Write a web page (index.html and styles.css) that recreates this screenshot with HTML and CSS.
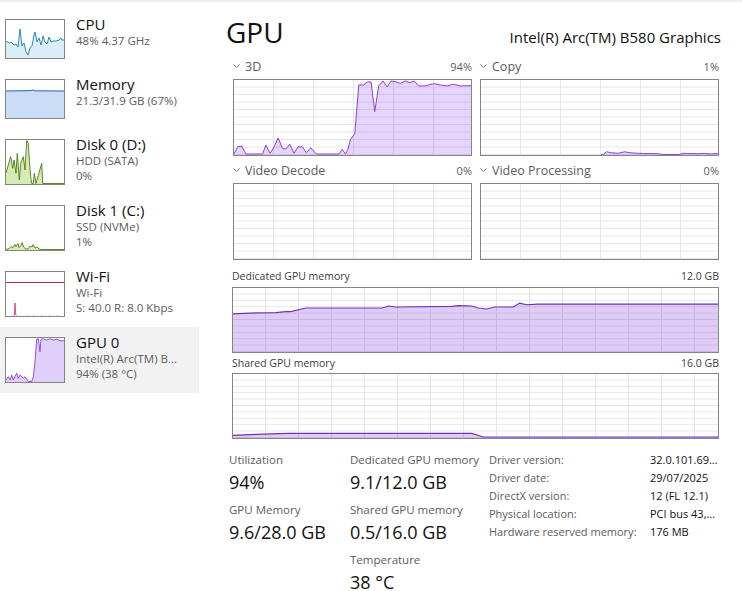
FILE: index.html
```html
<!DOCTYPE html>
<html>
<head>
<meta charset="utf-8">
<title>Task Manager - GPU</title>
<link rel="stylesheet" href="styles.css">
</head>
<body>
<div class="app">
  <aside class="sidebar">
    <div class="item">
      <div class="thumb">
        <svg viewBox="0 0 58 38" preserveAspectRatio="none">
          <path class="cpu-fill" d="M0,38 L0,21 3,23 5,22 8,25 10,24 12,27 14,9 16,26 18,23 20,32 22,35 24,28 26,26 28,15 29,12 31,22 33,18 35,25 37,16 39,22 41,24 43,17 45,22 47,21 50,21 53,20 55,18 56,20 58,20 L58,38 Z"/>
          <polyline class="cpu-line" points="0,21 3,23 5,22 8,25 10,24 12,27 14,9 16,26 18,23 20,32 22,35 24,28 26,26 28,15 29,12 31,22 33,18 35,25 37,16 39,22 41,24 43,17 45,22 47,21 50,21 53,20 55,18 56,20 58,20"/>
        </svg>
      </div>
      <div class="info">
        <div class="name">CPU</div>
        <div class="sub">48% 4.37 GHz</div>
      </div>
    </div>
    <div class="item">
      <div class="thumb">
        <svg viewBox="0 0 58 38" preserveAspectRatio="none">
          <path class="mem-fill" d="M0,38 L0,11 25,10.6 27,10 29,10.8 58,11 L58,38 Z"/>
          <polyline class="mem-line" points="0,11 25,10.6 27,10 29,10.8 58,11"/>
        </svg>
      </div>
      <div class="info">
        <div class="name">Memory</div>
        <div class="sub">21.3/31.9 GB (67%)</div>
      </div>
    </div>
    <div class="item">
      <div class="thumb tall">
        <svg viewBox="0 0 58 44" preserveAspectRatio="none">
          <path class="disk-fill" d="M0,44 L0,33 2.3,25 4.7,16.7 6.7,28.3 8,20 10,33.3 11.3,13.3 13.3,40 14.7,23.3 17.3,16.7 19,30 20.7,0.5 22.3,3.3 23.3,20 24.7,36.7 25.7,43.5 27.3,43.5 28.3,33.3 30,43.5 35.7,23.3 36.7,43.5 58,43.5 L58,44 Z"/>
          <polyline class="disk-line" points="0,33 2.3,25 4.7,16.7 6.7,28.3 8,20 10,33.3 11.3,13.3 13.3,40 14.7,23.3 17.3,16.7 19,30 20.7,0.5 22.3,3.3 23.3,20 24.7,36.7 25.7,43.5 27.3,43.5 28.3,33.3 30,43.5 35.7,23.3 36.7,43.5 58,43.5"/>
        </svg>
      </div>
      <div class="info">
        <div class="name">Disk 0 (D:)</div>
        <div class="sub">HDD (SATA)</div>
        <div class="sub">0%</div>
      </div>
    </div>
    <div class="item">
      <div class="thumb tall">
        <svg viewBox="0 0 58 44" preserveAspectRatio="none">
          <path class="disk-fill" d="M0,44 L0,43.5 3,42.5 5,40.5 7,41.5 9,38.5 10,40.5 12,37.5 13,41.5 15,39.5 16,36.5 18,41.5 20,43 22,43 24,40 26,41 27,38.5 29,42 31,41 33,43 35,43.5 58,43.5 L58,44 Z"/>
          <polyline class="disk-line" points="0,43.5 3,42.5 5,40.5 7,41.5 9,38.5 10,40.5 12,37.5 13,41.5 15,39.5 16,36.5 18,41.5 20,43 22,43 24,40 26,41 27,38.5 29,42 31,41 33,43 35,43.5 58,43.5"/>
        </svg>
      </div>
      <div class="info">
        <div class="name">Disk 1 (C:)</div>
        <div class="sub">SSD (NVMe)</div>
        <div class="sub">1%</div>
      </div>
    </div>
    <div class="item">
      <div class="thumb tall">
        <svg viewBox="0 0 58 44" preserveAspectRatio="none">
          <line class="wifi-top" x1="0" y1="10.5" x2="58" y2="10.5"/>
          <polyline class="wifi-line" points="7.5,43.5 8.5,43 9,31 9.8,43 10.5,43.5"/>
          <circle class="wifi-dot" cx="21" cy="43.3" r="0.5"/>
          <circle class="wifi-dot" cx="28" cy="43.3" r="0.5"/>
          <circle class="wifi-dot" cx="36" cy="43.3" r="0.5"/>
          <circle class="wifi-dot" cx="44" cy="43.3" r="0.5"/>
          <circle class="wifi-dot" cx="51" cy="43.3" r="0.5"/>
        </svg>
      </div>
      <div class="info">
        <div class="name">Wi-Fi</div>
        <div class="sub">Wi-Fi</div>
        <div class="sub">S: 40.0 R: 8.0 Kbps</div>
      </div>
    </div>
    <div class="item selected">
      <div class="thumb tall">
        <svg viewBox="0 0 58 44" preserveAspectRatio="none">
          <path class="gpu-fill" d="M0,44 L0,42 2.3,38.7 4,42 5.7,37 7.3,42 9,38.7 10.7,35.3 12.3,40.3 14,37 15.7,38.7 17.3,40.3 19,38.7 20.7,41 22.3,43.5 25.7,43.5 27.3,38.7 29,23.7 30.7,1.2 32.3,0.8 34,13.7 35,1.2 37.3,0.8 40.7,2 44,0.8 47.3,2 50.7,1.2 54,2.7 58,2.7 L58,44 Z"/>
          <polyline class="gpu-line" points="0,42 2.3,38.7 4,42 5.7,37 7.3,42 9,38.7 10.7,35.3 12.3,40.3 14,37 15.7,38.7 17.3,40.3 19,38.7 20.7,41 22.3,43.5 25.7,43.5 27.3,38.7 29,23.7 30.7,1.2 32.3,0.8 34,13.7 35,1.2 37.3,0.8 40.7,2 44,0.8 47.3,2 50.7,1.2 54,2.7 58,2.7"/>
        </svg>
      </div>
      <div class="info">
        <div class="name">GPU 0</div>
        <div class="sub">Intel(R) Arc(TM) B…</div>
        <div class="sub">94% (38 °C)</div>
      </div>
    </div>
  </aside>

  <main class="main">
    <header class="head">
      <h1 class="title">GPU</h1>
      <div class="device">Intel(R) Arc(TM) B580 Graphics</div>
    </header>

    <section class="engines">
      <div class="engine">
        <div class="label-row">
          <span class="eng-name"><svg class="chev" viewBox="0 0 7 4"><polyline points="0.5,0.5 3.5,3.5 6.5,0.5"/></svg>3D</span>
          <span class="pct">94%</span>
        </div>
        <div class="graph small">
          <svg viewBox="0 0 238 76" preserveAspectRatio="none">
            <path class="g-fill" d="M0,76 L0,75 3.7,67.7 7.7,67 12,75 28.7,75 32,66 36.3,74.3 40.3,67.7 44.3,58.7 48.7,69.3 52,70 56,65 60.3,74.3 64.3,67.7 68.7,67.7 72.7,73.7 77,68.7 82,74.3 83.7,75 105.3,75 108.7,70.3 112,75 114.3,70.3 117,60.3 121.3,54.3 125.3,5 130.3,5 133.7,2 137.7,2 141.3,32 145.3,6 149.7,1 153.7,7 157.7,1 162,1.7 167,3.3 172,1 177,2.7 181,1 185.3,6 192,6 200.3,3.7 207,5 213.7,6 220.3,4.3 227,6 238,5.7 L238,76 Z"/>
            <polyline class="g-line" points="0,75 3.7,67.7 7.7,67 12,75 28.7,75 32,66 36.3,74.3 40.3,67.7 44.3,58.7 48.7,69.3 52,70 56,65 60.3,74.3 64.3,67.7 68.7,67.7 72.7,73.7 77,68.7 82,74.3 83.7,75 105.3,75 108.7,70.3 112,75 114.3,70.3 117,60.3 121.3,54.3 125.3,5 130.3,5 133.7,2 137.7,2 141.3,32 145.3,6 149.7,1 153.7,7 157.7,1 162,1.7 167,3.3 172,1 177,2.7 181,1 185.3,6 192,6 200.3,3.7 207,5 213.7,6 220.3,4.3 227,6 238,5.7"/>
          </svg>
        </div>
      </div>
      <div class="engine">
        <div class="label-row">
          <span class="eng-name"><svg class="chev" viewBox="0 0 7 4"><polyline points="0.5,0.5 3.5,3.5 6.5,0.5"/></svg>Copy</span>
          <span class="pct">1%</span>
        </div>
        <div class="graph small">
          <svg viewBox="0 0 238 76" preserveAspectRatio="none">
            <path class="g-fill" d="M120,76 L122.7,75.5 126,72.7 131,73.7 137.7,74.3 144.3,72.7 149.3,73.7 157.7,74.3 177.7,74.7 182.7,75.5 199.3,75.5 202.7,74.3 217.7,74.7 224.3,74.3 231,75 238,74.3 L238,76 Z"/>
            <polyline class="g-line" points="120,76 122.7,75.5 126,72.7 131,73.7 137.7,74.3 144.3,72.7 149.3,73.7 157.7,74.3 177.7,74.7 182.7,75.5 199.3,75.5 202.7,74.3 217.7,74.7 224.3,74.3 231,75 238,74.3"/>
          </svg>
        </div>
      </div>
      <div class="engine">
        <div class="label-row">
          <span class="eng-name"><svg class="chev" viewBox="0 0 7 4"><polyline points="0.5,0.5 3.5,3.5 6.5,0.5"/></svg>Video Decode</span>
          <span class="pct">0%</span>
        </div>
        <div class="graph small"></div>
      </div>
      <div class="engine">
        <div class="label-row">
          <span class="eng-name"><svg class="chev" viewBox="0 0 7 4"><polyline points="0.5,0.5 3.5,3.5 6.5,0.5"/></svg>Video Processing</span>
          <span class="pct">0%</span>
        </div>
        <div class="graph small"></div>
      </div>
    </section>

    <section class="mem">
      <div class="mem-label"><span>Dedicated GPU memory</span><span>12.0 GB</span></div>
      <div class="graph wide">
        <svg viewBox="0 0 487 65" preserveAspectRatio="none">
          <path class="m-fill" d="M0,65 L0,26.3 23,25.3 43,25 53,24 58,24 73,20.3 149.7,20.3 156.3,18.3 163,19.3 219.7,18.7 226.3,18 239.7,18.3 246.3,20.3 254.7,21.3 263,19.3 281.3,19.3 288,15.3 294.7,17 306.3,16.3 487,16.3 L487,65 Z"/>
          <polyline class="m-line" points="0,26.3 23,25.3 43,25 53,24 58,24 73,20.3 149.7,20.3 156.3,18.3 163,19.3 219.7,18.7 226.3,18 239.7,18.3 246.3,20.3 254.7,21.3 263,19.3 281.3,19.3 288,15.3 294.7,17 306.3,16.3 487,16.3"/>
        </svg>
      </div>
      <div class="mem-label second"><span>Shared GPU memory</span><span>16.0 GB</span></div>
      <div class="graph wide">
        <svg viewBox="0 0 487 65" preserveAspectRatio="none">
          <path class="m-fill" d="M0,65 L0,62.3 23,61.3 54.7,60.3 239.7,60.3 251.3,64 487,64 L487,65 Z"/>
          <polyline class="m-line" points="0,62.3 23,61.3 54.7,60.3 239.7,60.3 251.3,64 487,64"/>
        </svg>
      </div>
    </section>

    <section class="stats">
      <div class="col col1">
        <div class="stat"><div class="stat-label">Utilization</div><div class="stat-value">94%</div></div>
        <div class="stat"><div class="stat-label">GPU Memory</div><div class="stat-value">9.6/28.0 GB</div></div>
      </div>
      <div class="col col2">
        <div class="stat"><div class="stat-label">Dedicated GPU memory</div><div class="stat-value">9.1/12.0 GB</div></div>
        <div class="stat"><div class="stat-label">Shared GPU memory</div><div class="stat-value">0.5/16.0 GB</div></div>
        <div class="stat"><div class="stat-label">Temperature</div><div class="stat-value">38 °C</div></div>
      </div>
      <div class="drv">
        <span class="k">Driver version:</span><span class="v">32.0.101.69…</span>
        <span class="k">Driver date:</span><span class="v">29/07/2025</span>
        <span class="k">DirectX version:</span><span class="v">12 (FL 12.1)</span>
        <span class="k">Physical location:</span><span class="v">PCI bus 43,…</span>
        <span class="k">Hardware reserved memory:</span><span class="v">176 MB</span>
      </div>
    </section>
  </main>
</div>
</body>
</html>
```

FILE: styles.css
```css
html, body {
  margin: 0;
  padding: 0;
  background: #ffffff;
}

body {
  font-family: "Open Sans", "Noto Sans", sans-serif;
  color: #1a1a1a;
}

.app {
  display: flex;
  width: 742px;
  height: 589px;
  overflow: hidden;
  border-top: 2px solid #eef0f4;
}

/* ---------- sidebar ---------- */
.sidebar {
  width: 199px;
  flex: none;
  padding-top: 7px;
}

.item {
  display: flex;
  padding: 10px 0 10px 5px;
}

.item.selected {
  background: #f2f2f2;
}

.thumb {
  flex: none;
  width: 58px;
  height: 38px;
  border: 1px solid #858585;
  background: #ffffff;
}

.thumb.tall {
  height: 44px;
}

.thumb svg {
  display: block;
  width: 100%;
  height: 100%;
}

.info {
  margin-left: 11px;
  margin-top: -3px;
  white-space: nowrap;
}

.name {
  font-size: 15px;
  line-height: 17px;
  color: #111;
}

.sub {
  font-size: 11.5px;
  line-height: 15px;
  color: #5c5c5c;
}

.cpu-fill { fill: #dbeef8; }
.cpu-line { fill: none; stroke: #1a7db6; stroke-width: 0.9; }
.mem-fill { fill: #c9ddf6; }
.mem-line { fill: none; stroke: #2563b3; stroke-width: 1; }
.disk-fill { fill: #d5eab4; }
.disk-line { fill: none; stroke: #4f7a12; stroke-width: 0.9; }
.wifi-top { stroke: #a3275c; stroke-width: 1; }
.wifi-line { fill: none; stroke: #cc3a80; stroke-width: 0.9; }
.wifi-dot { fill: #d98ab0; }
.gpu-fill { fill: #e0cffb; }
.gpu-line { fill: none; stroke: #8a3fe0; stroke-width: 0.9; }

/* ---------- main ---------- */
.main {
  margin-left: 30px;
  width: 492px;
  padding-top: 13px;
}

.head {
  display: flex;
  justify-content: space-between;
  align-items: baseline;
  height: 34px;
  margin: 0 0 7px -3px;
}

.title {
  margin: 0;
  font-size: 28px;
  font-weight: 400;
  line-height: 34px;
  color: #111;
}

.device {
  font-size: 15px;
  color: #111;
}

.engines {
  display: grid;
  grid-template-columns: 1fr 1fr;
  column-gap: 8px;
  row-gap: 4px;
  width: 486px;
  margin-left: 4px;
}

.label-row {
  display: flex;
  justify-content: space-between;
  align-items: baseline;
  height: 23px;
  line-height: 21px;
  white-space: nowrap;
}

.eng-name {
  font-size: 12.5px;
  color: #5c5c5c;
}

.chev {
  width: 7px;
  height: 4px;
  margin: 0 5px 3px 0;
  vertical-align: middle;
}

.chev polyline {
  fill: none;
  stroke: #6a6a6a;
  stroke-width: 0.9;
}

.pct {
  font-size: 11px;
  color: #5c5c5c;
}

.graph {
  border: 1px solid #858585;
  background-color: #ffffff;
}

.graph svg {
  display: block;
  width: 100%;
  height: 100%;
}

.graph.small {
  height: 75px;
  background-image:
    linear-gradient(to left, #e5e5e5 1px, transparent 1px),
    linear-gradient(to top, #e5e5e5 1px, transparent 1px);
  background-size: 40px 100%, 100% 10%;
}

.graph.wide {
  height: 64px;
  background-image:
    linear-gradient(to left, #e5e5e5 1px, transparent 1px),
    linear-gradient(to top, #e5e5e5 1px, transparent 1px);
  background-size: 33px 100%, 100% 10%;
}

.g-fill { fill: rgba(138, 64, 240, 0.22); }
.g-line { fill: none; stroke: #8b3fdc; stroke-width: 1; vector-effect: non-scaling-stroke; }
.m-fill { fill: rgba(128, 50, 220, 0.25); }
.m-line { fill: none; stroke: #7432b0; stroke-width: 1.2; vector-effect: non-scaling-stroke; }

.mem {
  width: 487px;
  margin: 8px 0 0 3px;
}

.mem-label {
  display: flex;
  justify-content: space-between;
  height: 19px;
  line-height: 16px;
  font-size: 10.5px;
  color: #3c3c3c;
}

.mem-label.second {
  height: 18px;
  margin-top: 2px;
}

/* ---------- stats ---------- */
.stats {
  display: flex;
  align-items: flex-start;
  margin-top: 12px;
}

.col1 { width: 121px; flex: none; }
.col2 { width: 139px; flex: none; }

.stat {
  height: 50px;
  white-space: nowrap;
}

.stat-label {
  font-size: 11.5px;
  line-height: 18px;
  color: #5c5c5c;
}

.stat-value {
  font-size: 18px;
  line-height: 26px;
  color: #111;
}

.drv {
  display: grid;
  grid-template-columns: 161px auto;
  align-content: start;
  font-size: 11px;
  line-height: 18px;
  white-space: nowrap;
}

.drv .k { color: #5c5c5c; }
.drv .v { color: #111; }
```
